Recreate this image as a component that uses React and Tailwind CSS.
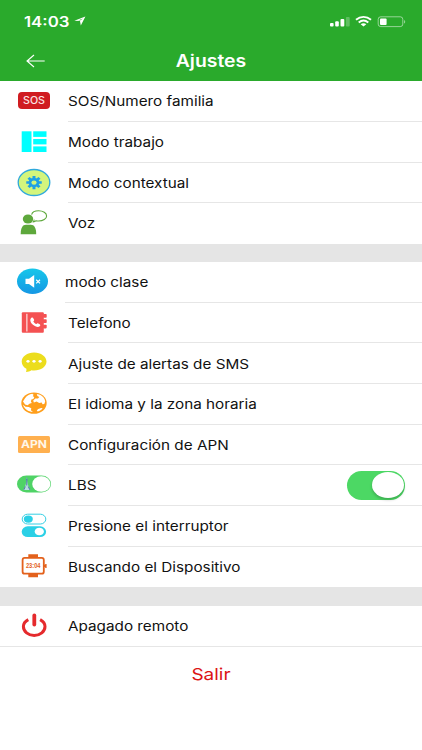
import React, { useState } from "react";

// every row icon shares the same 68x40 canvas
const Icon = ({ children }) => (
  <svg width="68" height="40" viewBox="0 0 68 40" fill="none">
    {children}
  </svg>
);

const SosIcon = () => (
  <Icon>
    <rect x="18" y="11" width="32" height="17" rx="4" fill="#d01c20" />
    <text
      x="34"
      y="23.1"
      textAnchor="middle"
      textLength="22"
      lengthAdjust="spacingAndGlyphs"
      className="font-[Inter,sans-serif] text-[10px] font-medium"
      fill="#fbe3e3"
    >
      SOS
    </text>
  </Icon>
);

const WorkModeIcon = () => (
  <Icon>
    <g fill="#0ff">
      <rect x="21.7" y="9.3" width="9.8" height="20.7" />
      <rect x="33.2" y="9.3" width="13.3" height="5.6" />
      <rect x="33.2" y="17" width="13.3" height="5.4" />
      <rect x="33.2" y="24.4" width="13.3" height="5.6" />
    </g>
  </Icon>
);

const ContextIcon = () => (
  <Icon>
    <ellipse cx="34" cy="19.5" rx="15.8" ry="13" fill="#d3f57c" stroke="#2fa9dc" strokeWidth="1.3" />
    <g transform="translate(34 19.6) scale(1.14 .96)">
      <path
        d="M0-6.8V6.8M-6.8 0H6.8M-4.8-4.8 4.8 4.8M-4.8 4.8 4.8-4.8"
        stroke="#1ea0e6"
        strokeWidth="2.6"
      />
      <circle r="4.8" fill="#1ea0e6" />
      <circle r="2.3" fill="#d3f57c" />
    </g>
  </Icon>
);

const VoiceIcon = () => (
  <Icon>
    <ellipse cx="28" cy="16" rx="5.2" ry="4.5" fill="#5ea83c" />
    <path d="M20.7 31.2c0-6.2 1.8-9.4 5.3-9.4h4.8c3.5 0 5.4 3.2 5.4 9.4z" fill="#5ea83c" />
    <path
      d="M31.6 11.6c.6-2.2 3.5-3.8 7-3.8 4.5 0 8 2.3 8 5.1s-3.5 5.1-8 5.1c-.9 0-1.700-.1-2.500-.3-.9.9-1.800 1.100-3.100 1.200.9-.7 1.200-1.400 1.100-2.300"
      stroke="#5ea83c"
      strokeWidth="1.1"
      strokeLinejoin="round"
    />
  </Icon>
);

const MuteIcon = () => (
  <Icon>
    <defs>
      <linearGradient id="mute" x1="0" y1="0" x2="0" y2="1">
        <stop offset="0" stopColor="#16c7ea" />
        <stop offset="1" stopColor="#1597e4" />
      </linearGradient>
    </defs>
    <ellipse cx="32.5" cy="19.2" rx="15.5" ry="12.8" fill="url(#mute)" />
    <path d="M25.5 16.800h3.500l5.200-3.700v12.600l-5.200-3.700h-3.500z" fill="#fff" />
    <path d="m36.200 17.700 3.800 3.700m0-3.700-3.800 3.700" stroke="#fff" strokeWidth="1.2" />
  </Icon>
);

const PhoneIcon = () => (
  <Icon>
    <rect x="21.8" y="9.300" width="22" height="20.500" rx="1" fill="#f45152" />
    <path d="M26.900 10.800v17.700" stroke="#fff" strokeWidth="1" />
    <g fill="#f45152">
      <rect x="43" y="11" width="3.7" height="3.7" rx=".8" />
      <rect x="43" y="16.3" width="3.7" height="3.7" rx=".8" />
      <rect x="43" y="21.7" width="3.7" height="3.7" rx=".8" />
    </g>
    <path
      d="M31.200 15.100c.9-.8 1.700-.6 2.200.3l.7 1.300c.2.600-.1 1-.8 1.500.6 1.500 1.700 2.400 3.200 2.900.6-.7 1.100-.9 1.700-.6l1.500.8c.8.500.8 1.200 0 1.900-1 .9-2.500.9-4.400 0-3-1.400-4.700-3.300-5-5.700-.1-1 .2-1.800.9-2.400z"
      fill="#fff"
    />
  </Icon>
);

const SmsIcon = () => (
  <Icon>
    <g transform="translate(0 .8)">
      <path
        d="M34.100 8.600c6.900 0 12.400 4 12.400 9s-5.500 9-12.400 9c-.9 0-1.800-.1-2.700-.2-1.400 1-3.300 1.600-5.400 1.700.5-1 .6-2 .4-3.100-2.900-1.600-4.700-4.300-4.700-7.400 0-5 5.500-9 12.400-9z"
        fill="#ecdd1d"
      />
      <g fill="#fff">
        <ellipse cx="28" cy="17.5" rx="1.6" ry="1.4" />
        <ellipse cx="34" cy="17.5" rx="1.6" ry="1.4" />
        <ellipse cx="40.1" cy="17.5" rx="1.6" ry="1.4" />
      </g>
    </g>
  </Icon>
);

const GlobeIcon = () => (
  <Icon>
    <ellipse cx="34" cy="19.1" rx="12.7" ry="10.7" fill="#ff9f1c" />
    <g fill="#fff">
      <path d="M25 14.200c1.700-2.600 4.300-4.100 7.300-4.500l1.300 1.100-.8 1.500 1.500.8-.9 1.900-2 .5-.5 2 .9 1.500-2.400.7-1.700 1.600-2.600-.8-2.100-3.100z" />
      <path d="M23 20.800l2.500 1.900 3.200.4 2.600 1.200-.4 1.900 2 1.700c-4.600-.2-8.800-2.900-9.900-7.100z" />
      <path d="M36.800 10l3.200.8c2.900 1.400 4.800 3.700 5.200 6.600l-.9 2.500-1.800.3-.8-1.600-2.500.3-2.600-1.300-2.700 1-.7-2.200 2.100-1.900 2.700-.1 1.300-1.500-1.900-1z" />
      <path d="M38.200 25l3-.9 1.500.2c-1.100 1.500-2.900 2.700-5 3.300l-.9-1.100z" />
    </g>
  </Icon>
);

const ApnIcon = () => (
  <Icon>
    <rect x="18" y="11" width="32" height="17" rx="1.5" fill="#ffb04f" />
    <text
      x="34"
      y="23.3"
      textAnchor="middle"
      textLength="26"
      lengthAdjust="spacingAndGlyphs"
      className="font-[Inter,sans-serif] text-[10.5px] font-bold"
      fill="#fff6e8"
    >
      APN
    </text>
  </Icon>
);

const LbsIcon = () => (
  <Icon>
    <rect x="17" y="10.5" width="34" height="17" rx="9.5" ry="8.5" fill="#4fd366" />
    <ellipse cx="41.3" cy="19" rx="9.1" ry="7.8" fill="#fff" />
    <path d="M26.800 12.500v3.500" stroke="#7b9fc0" strokeWidth="1" />
    <path d="m26.800 14.500-1.300 5.800-2.200 4.700h7l-2.200-4.700z" fill="#b7dce0" />
    <path d="M26.800 14v6.500M25.300 21.500l-1.500 3.300m4.500-3.300 1.500 3.300" stroke="#4c77a6" strokeWidth="1" />
  </Icon>
);

const SwitchIcon = () => (
  <Icon>
    <rect x="22.2" y="8.2" width="23.6" height="9.8" rx="5.5" ry="4.9" fill="#fff" stroke="#35cfe4" />
    <ellipse cx="28.3" cy="13.1" rx="4.5" ry="3.6" fill="#2bd0e6" />
    <rect x="21.7" y="20.3" width="24.4" height="10.8" rx="6" ry="5.4" fill="#2bd0e6" />
    <ellipse cx="39.3" cy="25.5" rx="4.6" ry="3.8" fill="#fff" />
  </Icon>
);

const WatchIcon = () => (
  <Icon>
    <path d="M28.300 7.300h9.700v3.500h-9.700zM28.300 26.700h9.700v3.500h-9.700z" fill="#e3611c" />
    <rect x="22.6" y="10.9" width="21.2" height="15.8" rx="2" fill="#fff" stroke="#e3611c" strokeWidth="1.8" />
    <path d="M44 17.800h1.200v-.8h1.400v4h-1.400v-.9H44z" fill="#e3611c" />
    <text
      x="33.2"
      y="21.4"
      textAnchor="middle"
      textLength="14.5"
      lengthAdjust="spacingAndGlyphs"
      className="font-['Liberation_Sans',sans-serif] text-[6.5px] font-bold"
      fill="#e3611c"
    >
      23:04
    </text>
  </Icon>
);

const PowerIcon = () => (
  <Icon>
    <path
      d="M28.300 13.600c-3 1.600-4.900 4-4.900 7 0 5 4.900 8.900 10.800 8.900S45 25.600 45 20.600c0-3-1.900-5.400-4.900-7"
      stroke="#e52a2d"
      strokeWidth="3"
    />
    <path d="M34.300 9.500v9" stroke="#e52a2d" strokeWidth="3.8" strokeLinecap="round" />
  </Icon>
);

const sections = [
  [
    { label: "SOS/Numero familia", icon: SosIcon },
    { label: "Modo trabajo", icon: WorkModeIcon },
    { label: "Modo contextual", icon: ContextIcon },
    { label: "Voz", icon: VoiceIcon },
  ],
  [
    { label: "modo clase", icon: MuteIcon, compact: true },
    { label: "Telefono", icon: PhoneIcon },
    { label: "Ajuste de alertas de SMS", icon: SmsIcon },
    { label: "El idioma y la zona horaria", icon: GlobeIcon },
    { label: "Configuración de APN", icon: ApnIcon },
    { label: "LBS", icon: LbsIcon, toggle: true },
    { label: "Presione el interruptor", icon: SwitchIcon },
    { label: "Buscando el Dispositivo", icon: WatchIcon },
  ],
  [{ label: "Apagado remoto", icon: PowerIcon }],
];

const Toggle = () => {
  const [on, setOn] = useState(true);

  return (
    <button
      role="switch"
      aria-checked={on}
      aria-label="LBS"
      onClick={() => setOn(!on)}
      className={`mr-[17px] flex h-[29px] w-[58px] items-center rounded-full px-[1.5px] ${
        on ? "justify-end bg-[#4cd864]" : "justify-start bg-gray-300"
      }`}
    >
      <span className="h-[26px] w-[32px] rounded-[50%] bg-white shadow-[0_2px_3px_rgba(0,0,0,0.2)]" />
    </button>
  );
};

const Row = ({ item, last }) => {
  const RowIcon = item.icon;

  return (
    <li className="flex h-[40.66px]">
      <div className={`shrink-0 ${item.compact ? "w-[65px]" : "w-[68px]"}`}>
        <RowIcon />
      </div>
      <div
        className={`flex flex-1 items-center justify-between border-b ${
          last ? "border-transparent" : "border-[#e6e6e6]"
        }`}
      >
        <span className="origin-left scale-x-[1.175] whitespace-nowrap pt-[2px] text-[13px] text-[#111]">
          {item.label}
        </span>
        {item.toggle && <Toggle />}
      </div>
    </li>
  );
};

const StatusBar = () => (
  <div className="flex h-[42px] items-center justify-between pl-6 pr-4">
    <div className="flex items-center">
      <span className="w-[50px] whitespace-nowrap pt-px text-[14px] font-semibold">
        <span className="inline-block origin-left scale-x-[1.2]">14:03</span>
      </span>
      <svg width="13" height="12" viewBox="0 0 13 12" fill="none">
        <path d="M.3 5.700 11.400 1.600 6.800 10.400 6 6.100z" fill="#fff" />
        <path d="M4.200 5.500 9 3.500 6.600 5.300z" fill="#2aaa2c" />
      </svg>
    </div>
    <svg width="76" height="14" viewBox="0 0 76 14" fill="none">
      <g fill="#fff">
        <rect x="0" y="9" width="3.6" height="3.6" rx="1" />
        <rect x="5.2" y="7.2" width="3.6" height="5.4" rx="1" />
        <rect x="10.5" y="5" width="3.8" height="7.6" rx="1" />
        <rect x="15.9" y="3" width="3.8" height="9.6" rx="1" opacity=".25" />
        <path d="M33.500 12.600 30.700 10.200c1.600-1.200 4-1.200 5.600 0z" />
        <rect x="50" y="4.4" width="6.6" height="6.6" rx="1" />
        <path d="M74.200 5.900c1.300.5 1.300 3.200 0 3.700z" opacity=".6" />
      </g>
      <path
        d="M26 5.800c4.500-3.900 10.500-3.900 15 0M28.700 8.500c3-2.500 6.600-2.500 9.600 0"
        stroke="#fff"
        strokeWidth="1.9"
      />
      <rect x="48.2" y="2.8" width="24.6" height="9.8" rx="2.5" stroke="#fff" strokeOpacity=".5" />
    </svg>
  </div>
);

const App = () => {
  return (
    <div className="min-h-[750px] w-full overflow-hidden bg-white font-[Inter,sans-serif]">
      <header className="h-[81.3px] bg-[#2aaa2c] text-white">
        <StatusBar />
        <div className="grid h-[38px] grid-cols-[68px_1fr_68px] items-center">
          <button aria-label="Volver" className="pl-[26px]">
            <svg width="20" height="14" viewBox="0 0 20 14" fill="none">
              <path d="M8 1 1 7l7 6M1 7h17.700" stroke="#fff" strokeWidth="1.1" />
            </svg>
          </button>
          <h1 className="scale-x-[1.14] pt-[2px] text-center text-[17px] font-semibold">
            Ajustes
          </h1>
        </div>
      </header>
      {sections.map((items, i) => (
        <React.Fragment key={i}>
          {i > 0 && <div className="h-[18.2px] bg-[#e5e5e5]" />}
          <ul>
            {items.map((item, j) => (
              <Row key={item.label} item={item} last={j === items.length - 1} />
            ))}
          </ul>
        </React.Fragment>
      ))}
      <button className="flex h-14 w-full items-center justify-center border-t border-[#e6e6e6] text-[16.5px] text-[#dc1414]">
        <span className="scale-x-[1.15]">Salir</span>
      </button>
    </div>
  );
};

export default App;
